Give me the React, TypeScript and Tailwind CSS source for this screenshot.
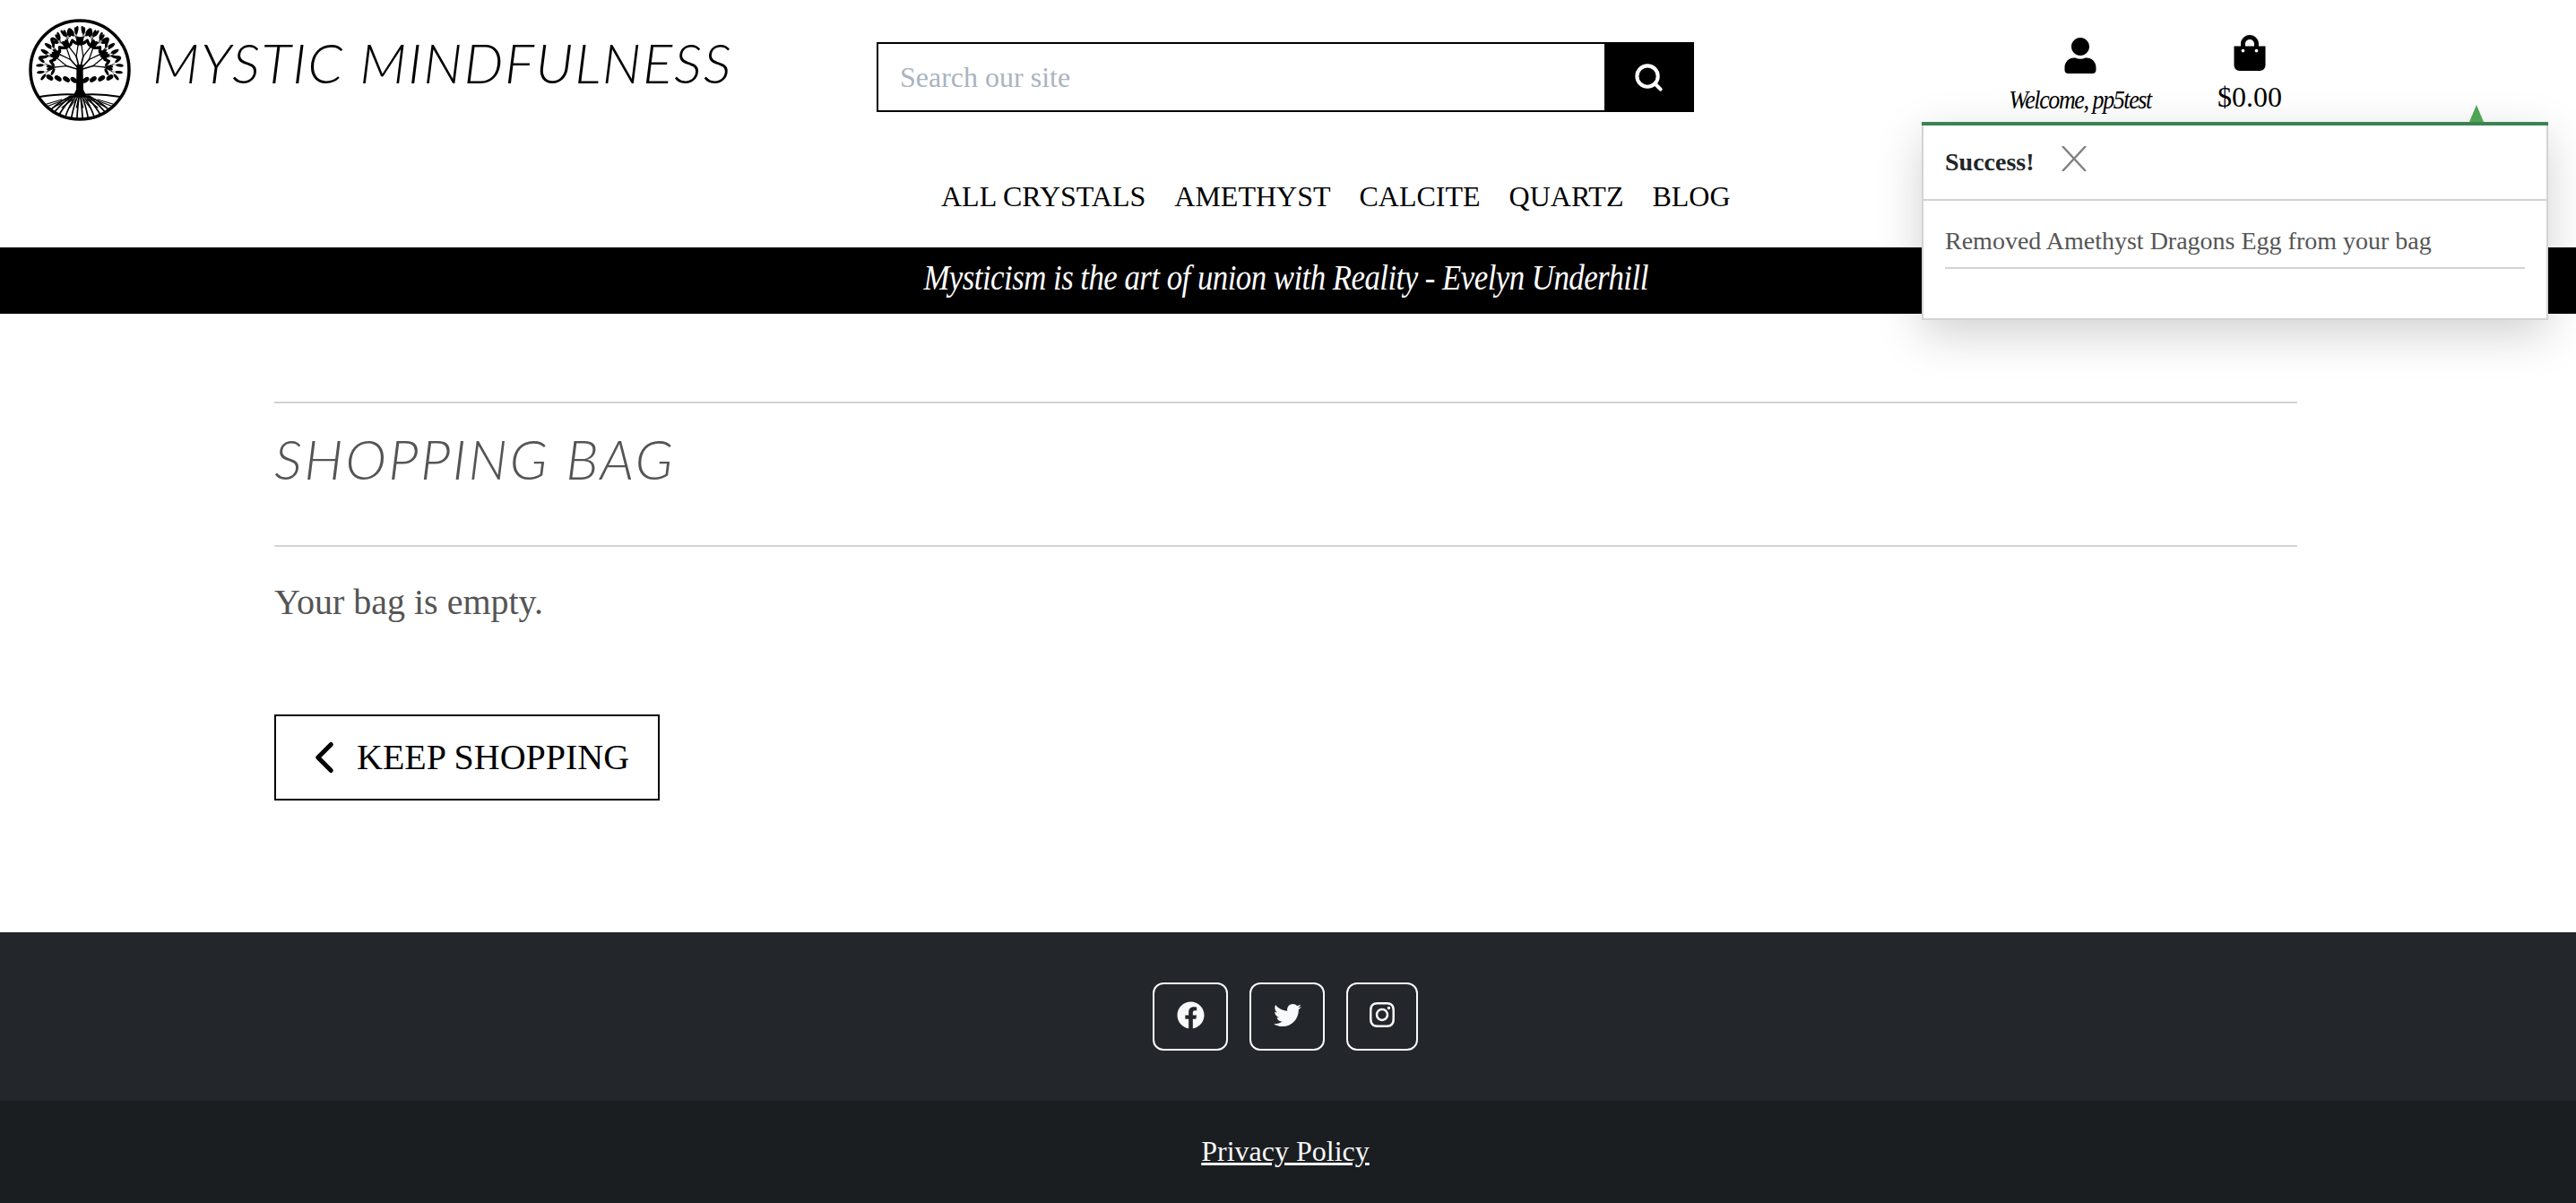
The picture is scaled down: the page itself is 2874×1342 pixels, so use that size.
import type { ReactNode } from "react";
import { ChevronLeft, Search } from "lucide-react";
import {
  FaFacebook,
  FaInstagram,
  FaShoppingBag,
  FaTwitter,
  FaUser,
} from "react-icons/fa";

const NAV = ["ALL CRYSTALS", "AMETHYST", "CALCITE", "QUARTZ", "BLOG"];

type Seg = { x1: number; y1: number; x2: number; y2: number; w: number };
type Leaf = { x: number; y: number; a: number };

// branching tree for the logo, fixed angles so every render is the same
function growTree() {
  const segs: Seg[] = [];
  const leaves: Leaf[] = [];
  const grow = (x: number, y: number, a: number, len: number, depth: number) => {
    const x2 = x + Math.cos(a) * len;
    const y2 = y + Math.sin(a) * len;
    segs.push({ x1: x, y1: y, x2, y2, w: 0.45 + depth * 0.4 });
    if (depth === 0) {
      leaves.push({ x: x2, y: y2, a });
      return;
    }
    if (depth === 1) {
      leaves.push({ x: (x + x2) / 2 + Math.sin(a) * 3.2, y: (y + y2) / 2 - Math.cos(a) * 3.2, a: a - 0.6 });
      leaves.push({ x: (x + x2) / 2 - Math.sin(a) * 3.2, y: (y + y2) / 2 + Math.cos(a) * 3.2, a: a + 0.6 });
    }
    grow(x2, y2, a - 0.4, len * 0.8, depth - 1);
    grow(x2, y2, a + 0.4, len * 0.8, depth - 1);
  };
  for (const a of [-2.85, -2.3, -1.82, -1.32, -0.84, -0.29]) {
    grow(59, 58, a, 15.5, 3);
  }
  return { segs, leaves };
}

const TREE = growTree();

function TreeLogo() {
  const roots = [-40, -32, -24, -16, -9, -3, 3, 9, 16, 24, 32, 40];
  return (
    <svg viewBox="0 0 118 118" className="h-[118px] w-[118px] shrink-0">
      <defs>
        <clipPath id="disc">
          <circle cx="59" cy="58" r="54" />
        </clipPath>
        <clipPath id="canopy">
          <rect x="0" y="0" width="118" height="74" />
        </clipPath>
      </defs>
      <g clipPath="url(#disc)" fill="#000" stroke="#000" strokeLinecap="round">
        <g clipPath="url(#canopy)">
          {TREE.segs.map((s, i) => (
            <line key={i} x1={s.x1} y1={s.y1} x2={s.x2} y2={s.y2} strokeWidth={s.w} />
          ))}
          {TREE.leaves.map((l, i) => (
            <ellipse
              key={i}
              cx={l.x}
              cy={l.y}
              rx="4.2"
              ry="1.6"
              stroke="none"
              transform={`rotate(${(l.a * 180) / Math.PI} ${l.x} ${l.y})`}
            />
          ))}
        </g>
        {[-36, -26, -16, -7, 7, 16, 26, 36].map((d) => (
          <ellipse
            key={d}
            cx={59 + d}
            cy={70 - Math.abs(d) * 0.12}
            rx="4.4"
            ry="2.6"
            stroke="none"
            transform={`rotate(${d > 0 ? -35 : 35} ${59 + d} 70)`}
          />
        ))}
        <path d="M55.5 52 L62.5 52 L63 80 L67 88 L51 88 L55 80 Z" stroke="none" />
        <path d="M14 88 Q40 84 59 86 Q80 84 104 88" fill="none" strokeWidth="2" />
        {roots.map((d) => (
          <path
            key={d}
            d={`M${59 + d * 0.25} 87 Q${59 + d * 0.7} 96 ${59 + d * 1.05} 112`}
            fill="none"
            strokeWidth="1.7"
          />
        ))}
        {roots.map((d) => (
          <path
            key={`b${d}`}
            d={`M${59 + d * 0.5} 91 L${59 + d * 1.25} 100`}
            fill="none"
            strokeWidth="1.2"
          />
        ))}
      </g>
      <circle cx="59" cy="58" r="55" fill="none" stroke="#000" strokeWidth="3.5" />
    </svg>
  );
}

function SocialButton({ width, children }: { width: string; children: ReactNode }) {
  return (
    <a className={`flex h-[76px] items-center justify-center rounded-[12px] border-2 border-[#f8f9fa] pb-[4px] text-[#f8f9fa] ${width}`}>
      {children}
    </a>
  );
}

function Toast() {
  return (
    <div className="absolute left-[2144px] top-[136px] z-10 h-[221px] w-[699px] border-2 border-t-0 border-[#d3d3d3] bg-white shadow-[0_16px_48px_rgba(0,0,0,0.18)]">
      <div className="absolute left-[609px] top-[-19px] h-0 w-0 border-x-[8px] border-b-[19px] border-x-transparent border-b-[#4fa453]" />
      <div className="-mx-[2px] h-[4px] bg-[#3c8354]" />
      <div className="flex h-[84px] items-center gap-[30px] border-b-2 border-[#d3d3d3] pl-6">
        <strong className="text-[28px] leading-none text-[#212529]">Success!</strong>
        <svg viewBox="0 0 28 28" className="mb-[8px] h-[28px] w-[28px]" stroke="#808080" strokeWidth="2.4" fill="none">
          <path d="M1 0 L27 28 M27 0 L1 28" />
        </svg>
      </div>
      <div className="px-6 pt-[28px]">
        <p className="border-b-2 border-[#d3d3d3] pb-[12px] text-[28px] leading-[34px] text-[#555]">
          Removed Amethyst Dragons Egg from your bag
        </p>
      </div>
    </div>
  );
}

export default function App() {
  return (
    <div className="relative min-h-[1342px] overflow-hidden bg-white font-['Liberation_Serif',serif]">
      <header className="h-[276px]">
        <div className="grid h-[170px] grid-cols-3">
          <div className="flex items-start gap-[22px] pl-[30px] pt-[20px]">
            <TreeLogo />
            <span className="mt-[14px] whitespace-nowrap font-['Lato',sans-serif] text-[62px] font-light italic leading-[70px] tracking-[1.7px] text-black">
              MYSTIC MINDFULNESS
            </span>
          </div>
          <div className="pl-[20px] pt-[47px]">
            <div className="flex h-[78px] w-[912px] border-2 border-black">
              <input
                placeholder="Search our site"
                className="min-w-0 flex-1 bg-white pl-[24px] text-[32px] outline-none placeholder:text-[#aab4c0]"
              />
              <button className="flex w-[98px] items-center justify-center bg-black text-white">
                <Search size={35} strokeWidth={2.8} />
              </button>
            </div>
          </div>
          <div className="flex gap-[29px] pl-[305px] pt-[39px]">
            <div className="flex w-[200px] flex-col items-center">
              <FaUser size={40} className="mt-[3px]" />
              <span className="mt-[11px] scale-x-[0.865] whitespace-nowrap text-[30px] italic leading-[36px] tracking-[-1.6px]">
                Welcome, pp5test
              </span>
            </div>
            <div className="flex w-[120px] flex-col items-center">
              <FaShoppingBag size={40} />
              <span className="mt-[11px] text-[32px] leading-[36px]">$0.00</span>
            </div>
          </div>
        </div>
        <nav className="flex h-[98px] items-center gap-[32px] pl-[1050px] text-[32px] leading-none text-black">
          {NAV.map((item) => (
            <a key={item} className="whitespace-nowrap">
              {item}
            </a>
          ))}
        </nav>
      </header>

      <div className="flex h-[74px] items-center justify-center bg-black pb-[6px] pr-[5px] text-[40px] italic leading-none text-white">
        <span className="scale-x-[0.87] whitespace-nowrap tracking-[-0.6px]">
          Mysticism is the art of union with Reality - Evelyn Underhill
        </span>
      </div>

      <main className="ml-[306px] mr-[311px] h-[690px] pt-[98px]">
        <div className="h-[162px] border-y-2 border-[#d3d3d3] pt-[26px]">
          <h1 className="font-['Lato',sans-serif] text-[62px] font-light italic leading-[70px] tracking-[2.4px] text-[#555]">
            SHOPPING BAG
          </h1>
        </div>
        <p className="mt-[38px] text-[40px] leading-[48px] text-[#555]">Your bag is empty.</p>
        <a className="mt-[101px] flex h-[96px] w-[430px] items-center gap-[7px] border-2 border-black pl-[25px] text-[40px] leading-none text-black">
          <ChevronLeft size={58} strokeWidth={2.1} />
          <span>KEEP SHOPPING</span>
        </a>
      </main>

      <footer>
        <div className="flex h-[188px] items-start justify-center gap-[24px] bg-[#23272b] pr-[6px] pt-[56px]">
          <SocialButton width="w-[84px]">
            <FaFacebook size={31} />
          </SocialButton>
          <SocialButton width="w-[84px]">
            <FaTwitter size={31} />
          </SocialButton>
          <SocialButton width="w-[80px]">
            <FaInstagram size={32} />
          </SocialButton>
        </div>
        <div className="flex h-[114px] items-center justify-center bg-[#1b1e21] pb-[3px] pr-[6px]">
          <a className="text-[32px] leading-none text-[#f8f9fa] underline">Privacy Policy</a>
        </div>
      </footer>

      <Toast />
    </div>
  );
}
